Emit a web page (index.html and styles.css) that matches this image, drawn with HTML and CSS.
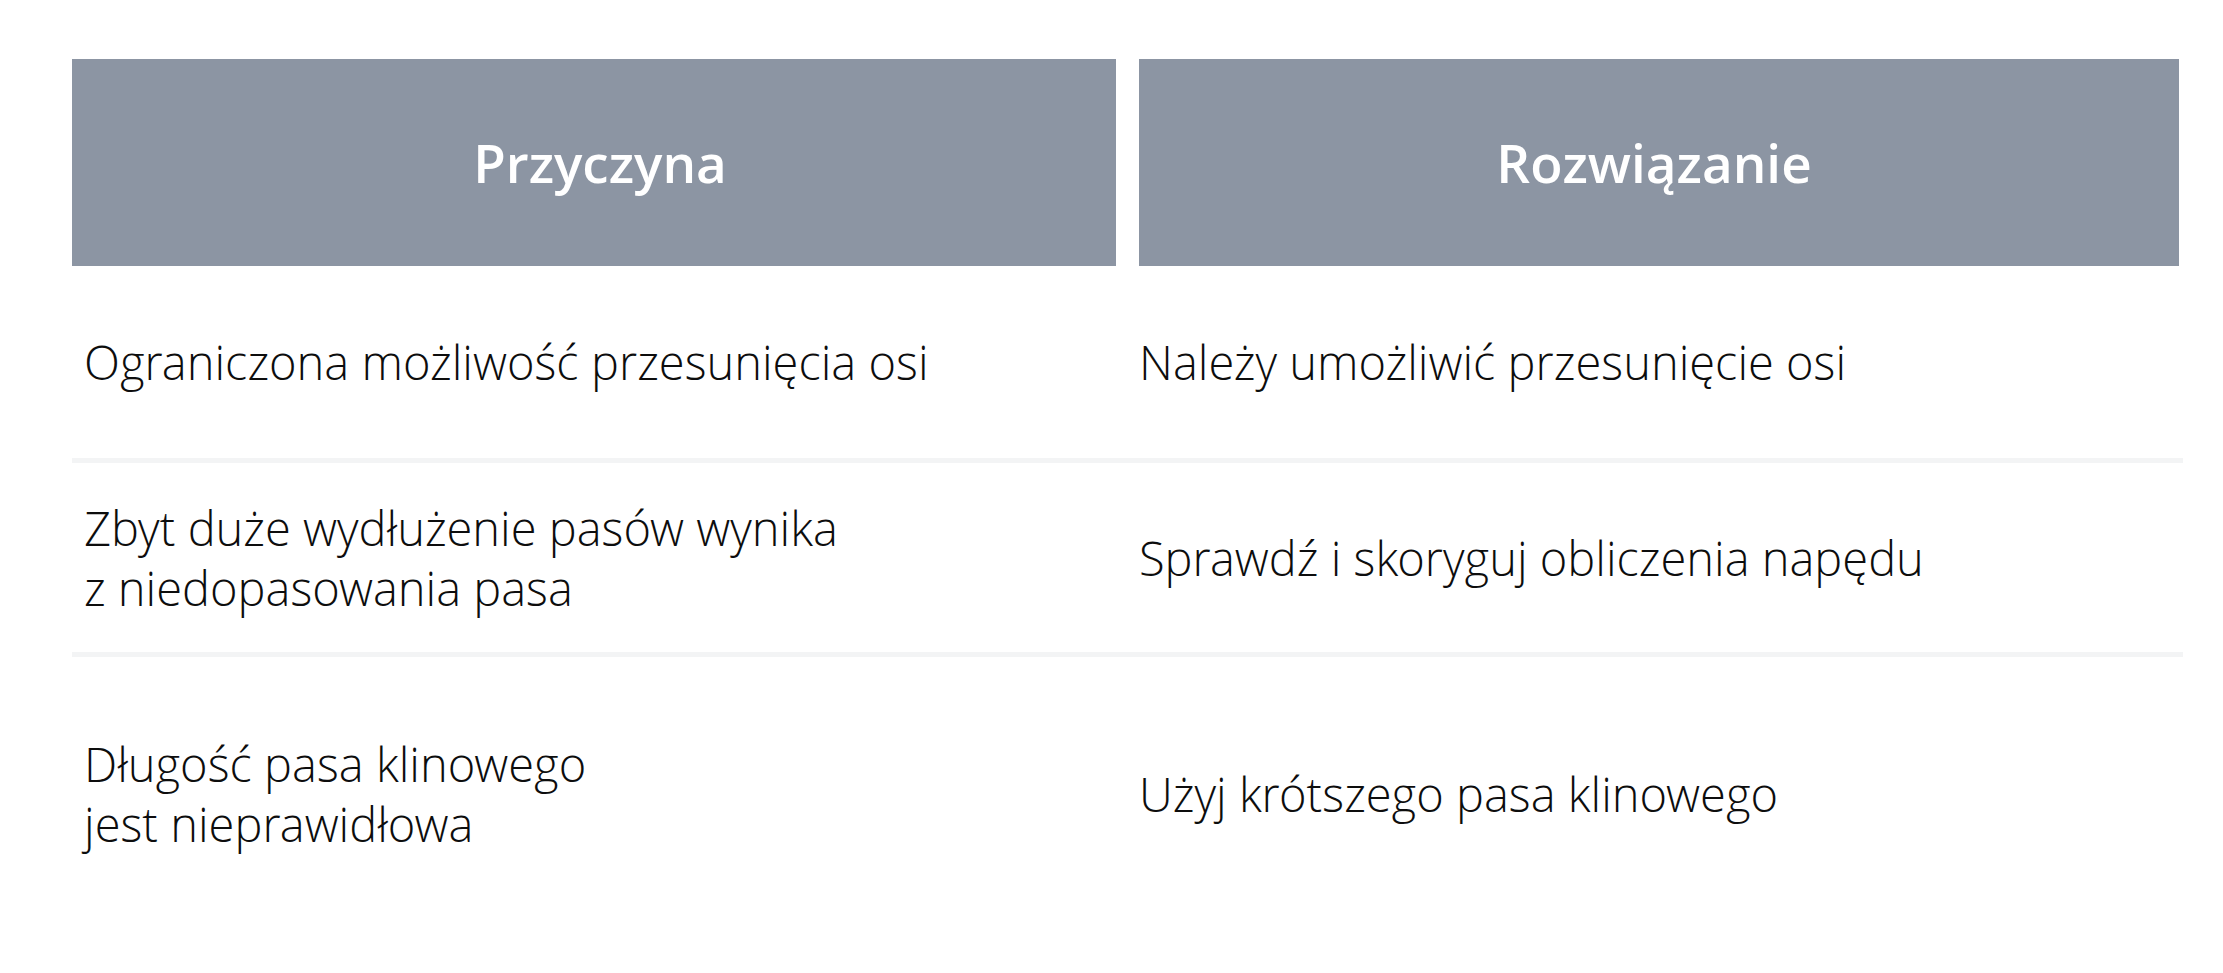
FILE: index.html
```html
<!DOCTYPE html>
<html lang="pl">
<head>
<meta charset="utf-8">
<title>Przyczyna / Rozwiązanie</title>
<link rel="stylesheet" href="styles.css">
</head>
<body>
<div class="table">
  <div class="head-row">
    <div class="th th-left">Przyczyna</div>
    <div class="th th-right">Rozwiązanie</div>
  </div>
  <div class="row row-1">
    <div class="td td-left">Ograniczona możliwość przesunięcia osi</div>
    <div class="td td-right">Należy umożliwić przesunięcie osi</div>
  </div>
  <div class="divider"></div>
  <div class="row row-2">
    <div class="td td-left">Zbyt duże wydłużenie pasów wynika<br>z niedopasowania pasa</div>
    <div class="td td-right">Sprawdź i skoryguj obliczenia napędu</div>
  </div>
  <div class="divider"></div>
  <div class="row row-3">
    <div class="td td-left">Długość pasa klinowego<br>jest nieprawidłowa</div>
    <div class="td td-right">Użyj krótszego pasa klinowego</div>
  </div>
</div>
</body>
</html>
```
FILE: styles.css
```css
html, body {
  margin: 0;
  padding: 0;
  background: #ffffff;
}
body {
  font-family: "Open Sans", "Noto Sans", sans-serif;
  color: #111111;
}
.table {
  margin: 59px 0 0 72px;
  width: 2111px;
  display: flex;
  flex-direction: column;
}
.head-row,
.row {
  display: grid;
  grid-template-columns: 1044px 1fr;
  column-gap: 23px;
}
.th {
  height: 207px;
  background: #8c95a3;
  color: #ffffff;
  font-weight: 600;
  font-size: 53px;
  display: flex;
  align-items: center;
  justify-content: center;
}
.th-left {
  padding-left: 12px;
}
.th-right {
  margin-right: 4px;
  padding-right: 10px;
}
.td {
  font-family: "Open Sans Light", "Open Sans", "Noto Sans", sans-serif;
  font-weight: 300;
  font-size: 47px;
  line-height: 60px;
  color: #0d0d0d;
  display: flex;
  align-items: center;
}
.td-left {
  padding-left: 12px;
}
.row-1 { height: 192px; }
.row-2 { height: 189px; }
.row-3 { height: 274px; }
.divider {
  height: 5px;
  background: #f3f4f5;
}
```
